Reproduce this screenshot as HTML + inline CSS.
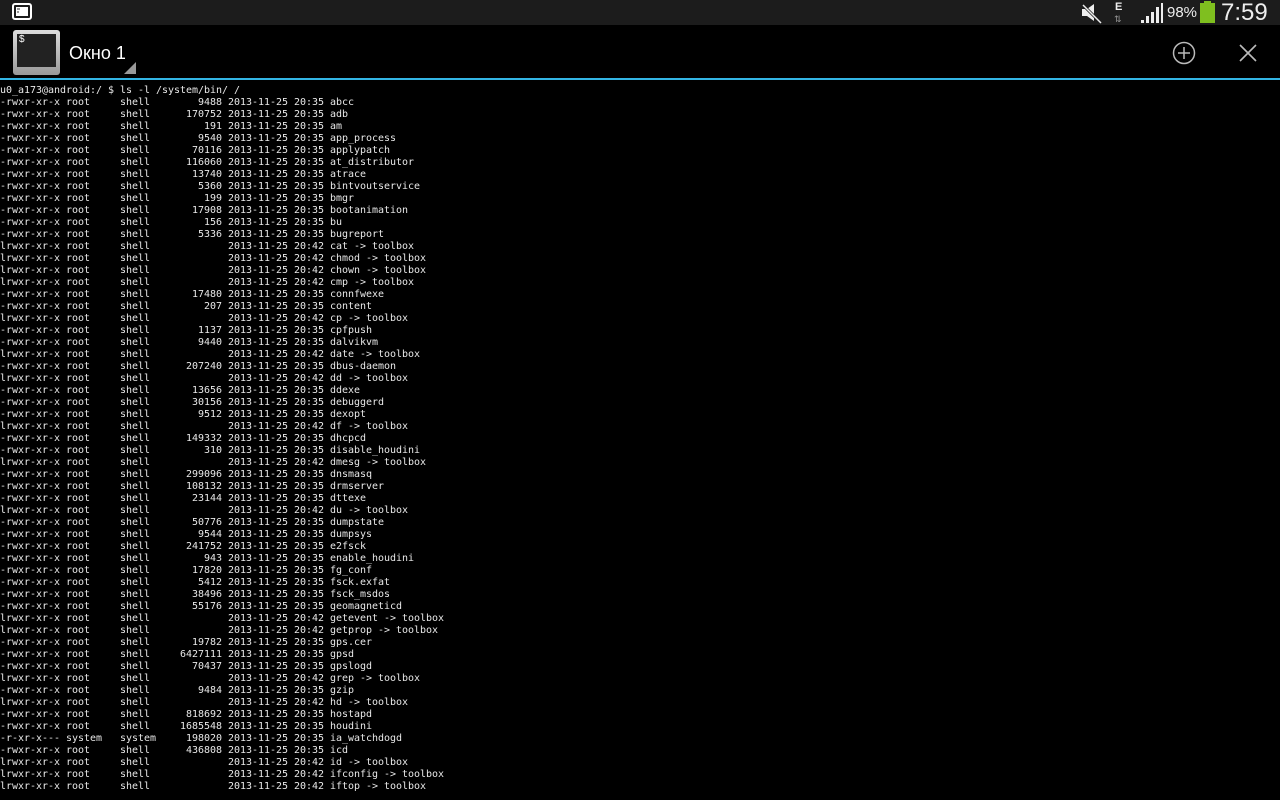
<!DOCTYPE html>
<html><head><meta charset="utf-8"><style>
*{margin:0;padding:0}
body{width:1280px;height:800px;background:#000;overflow:hidden;position:relative;font-family:"Liberation Sans",sans-serif}
#sb{position:absolute;left:0;top:0;width:1280px;height:25px;background:#1c1c1c}
#ab{position:absolute;left:0;top:25px;width:1280px;height:53px;background:#000}
#bl{position:absolute;left:0;top:78px;width:1280px;height:2px;background:#33b5e5}
pre{position:absolute;left:0;top:85px;font-family:"DejaVu Sans Mono","Liberation Mono",monospace;font-size:10px;line-height:12px;color:#e8e8e8;letter-spacing:-0.02px}
</style></head><body>
<div id="sb">
<svg style="position:absolute;left:12px;top:3px" width="20" height="18"><rect x="1" y="1" width="18" height="15" rx="2" fill="none" stroke="#fff" stroke-width="2"/><rect x="4" y="4" width="12" height="9" fill="#fff"/><path d="M5 6h3M5 9h2" stroke="#333"/></svg>
<svg style="position:absolute;left:1080px;top:2px" width="24" height="22"><path d="M2 7h5l7-5v17l-7-5H2z" fill="#eee"/><path d="M3 3l18 18" stroke="#1c1c1c" stroke-width="3"/><path d="M3 3l18 18" stroke="#eee" stroke-width="1.5"/></svg>
<div style="position:absolute;left:1115px;top:1px;color:#eee;font-size:11px;font-weight:bold">E</div>
<div style="position:absolute;left:1114px;top:14px;color:#999;font-size:9px">⇅</div>
<svg style="position:absolute;left:1140px;top:2px" width="24" height="21"><path d="M1 21h3v-3H1zM6 21h3v-7H6zM11 21h3V10h-3zM16 21h3V5h-3zM21 21h2V1h-2z" fill="#eee"/></svg>
<div style="position:absolute;left:1167px;top:4px;color:#eee;font-size:15px">98%</div>
<div style="position:absolute;left:1200px;top:3px;width:15px;height:20px;background:#7fbf1f"></div>
<div style="position:absolute;left:1204px;top:1px;width:7px;height:3px;background:#7fbf1f"></div>
<div style="position:absolute;left:1221px;top:-1px;color:#eee;font-size:24px">7:59</div>
</div>
<div id="ab">
<div style="position:absolute;left:13px;top:5px;width:47px;height:45px;background:linear-gradient(#ddd,#999);border-radius:3px"></div>
<div style="position:absolute;left:17px;top:9px;width:39px;height:33px;background:#222"></div>
<div style="position:absolute;left:19px;top:9px;color:#fff;font-size:10px">$</div>
<div style="position:absolute;left:69px;top:18px;color:#fff;font-size:18px">Окно 1</div>
<svg style="position:absolute;left:124px;top:37px" width="12" height="12"><path d="M12 0V12H0z" fill="#999"/></svg>
<svg style="position:absolute;left:1172px;top:16px" width="24" height="24"><circle cx="12" cy="12" r="10.5" fill="none" stroke="#bbb" stroke-width="1.5"/><path d="M12 6v12M6 12h12" stroke="#bbb" stroke-width="1.5"/></svg>
<svg style="position:absolute;left:1238px;top:18px" width="20" height="20"><path d="M2 2l16 16M18 2L2 18" stroke="#bbb" stroke-width="1.6"/></svg>
</div>
<div id="bl"></div>
<pre>u0_a173@android:/ $ ls -l /system/bin/ /
-rwxr-xr-x root     shell        9488 2013-11-25 20:35 abcc
-rwxr-xr-x root     shell      170752 2013-11-25 20:35 adb
-rwxr-xr-x root     shell         191 2013-11-25 20:35 am
-rwxr-xr-x root     shell        9540 2013-11-25 20:35 app_process
-rwxr-xr-x root     shell       70116 2013-11-25 20:35 applypatch
-rwxr-xr-x root     shell      116060 2013-11-25 20:35 at_distributor
-rwxr-xr-x root     shell       13740 2013-11-25 20:35 atrace
-rwxr-xr-x root     shell        5360 2013-11-25 20:35 bintvoutservice
-rwxr-xr-x root     shell         199 2013-11-25 20:35 bmgr
-rwxr-xr-x root     shell       17908 2013-11-25 20:35 bootanimation
-rwxr-xr-x root     shell         156 2013-11-25 20:35 bu
-rwxr-xr-x root     shell        5336 2013-11-25 20:35 bugreport
lrwxr-xr-x root     shell             2013-11-25 20:42 cat -> toolbox
lrwxr-xr-x root     shell             2013-11-25 20:42 chmod -> toolbox
lrwxr-xr-x root     shell             2013-11-25 20:42 chown -> toolbox
lrwxr-xr-x root     shell             2013-11-25 20:42 cmp -> toolbox
-rwxr-xr-x root     shell       17480 2013-11-25 20:35 connfwexe
-rwxr-xr-x root     shell         207 2013-11-25 20:35 content
lrwxr-xr-x root     shell             2013-11-25 20:42 cp -> toolbox
-rwxr-xr-x root     shell        1137 2013-11-25 20:35 cpfpush
-rwxr-xr-x root     shell        9440 2013-11-25 20:35 dalvikvm
lrwxr-xr-x root     shell             2013-11-25 20:42 date -> toolbox
-rwxr-xr-x root     shell      207240 2013-11-25 20:35 dbus-daemon
lrwxr-xr-x root     shell             2013-11-25 20:42 dd -> toolbox
-rwxr-xr-x root     shell       13656 2013-11-25 20:35 ddexe
-rwxr-xr-x root     shell       30156 2013-11-25 20:35 debuggerd
-rwxr-xr-x root     shell        9512 2013-11-25 20:35 dexopt
lrwxr-xr-x root     shell             2013-11-25 20:42 df -> toolbox
-rwxr-xr-x root     shell      149332 2013-11-25 20:35 dhcpcd
-rwxr-xr-x root     shell         310 2013-11-25 20:35 disable_houdini
lrwxr-xr-x root     shell             2013-11-25 20:42 dmesg -> toolbox
-rwxr-xr-x root     shell      299096 2013-11-25 20:35 dnsmasq
-rwxr-xr-x root     shell      108132 2013-11-25 20:35 drmserver
-rwxr-xr-x root     shell       23144 2013-11-25 20:35 dttexe
lrwxr-xr-x root     shell             2013-11-25 20:42 du -> toolbox
-rwxr-xr-x root     shell       50776 2013-11-25 20:35 dumpstate
-rwxr-xr-x root     shell        9544 2013-11-25 20:35 dumpsys
-rwxr-xr-x root     shell      241752 2013-11-25 20:35 e2fsck
-rwxr-xr-x root     shell         943 2013-11-25 20:35 enable_houdini
-rwxr-xr-x root     shell       17820 2013-11-25 20:35 fg_conf
-rwxr-xr-x root     shell        5412 2013-11-25 20:35 fsck.exfat
-rwxr-xr-x root     shell       38496 2013-11-25 20:35 fsck_msdos
-rwxr-xr-x root     shell       55176 2013-11-25 20:35 geomagneticd
lrwxr-xr-x root     shell             2013-11-25 20:42 getevent -> toolbox
lrwxr-xr-x root     shell             2013-11-25 20:42 getprop -> toolbox
-rwxr-xr-x root     shell       19782 2013-11-25 20:35 gps.cer
-rwxr-xr-x root     shell     6427111 2013-11-25 20:35 gpsd
-rwxr-xr-x root     shell       70437 2013-11-25 20:35 gpslogd
lrwxr-xr-x root     shell             2013-11-25 20:42 grep -> toolbox
-rwxr-xr-x root     shell        9484 2013-11-25 20:35 gzip
lrwxr-xr-x root     shell             2013-11-25 20:42 hd -> toolbox
-rwxr-xr-x root     shell      818692 2013-11-25 20:35 hostapd
-rwxr-xr-x root     shell     1685548 2013-11-25 20:35 houdini
-r-xr-x--- system   system     198020 2013-11-25 20:35 ia_watchdogd
-rwxr-xr-x root     shell      436808 2013-11-25 20:35 icd
lrwxr-xr-x root     shell             2013-11-25 20:42 id -> toolbox
lrwxr-xr-x root     shell             2013-11-25 20:42 ifconfig -> toolbox
lrwxr-xr-x root     shell             2013-11-25 20:42 iftop -> toolbox</pre>
</body></html>
